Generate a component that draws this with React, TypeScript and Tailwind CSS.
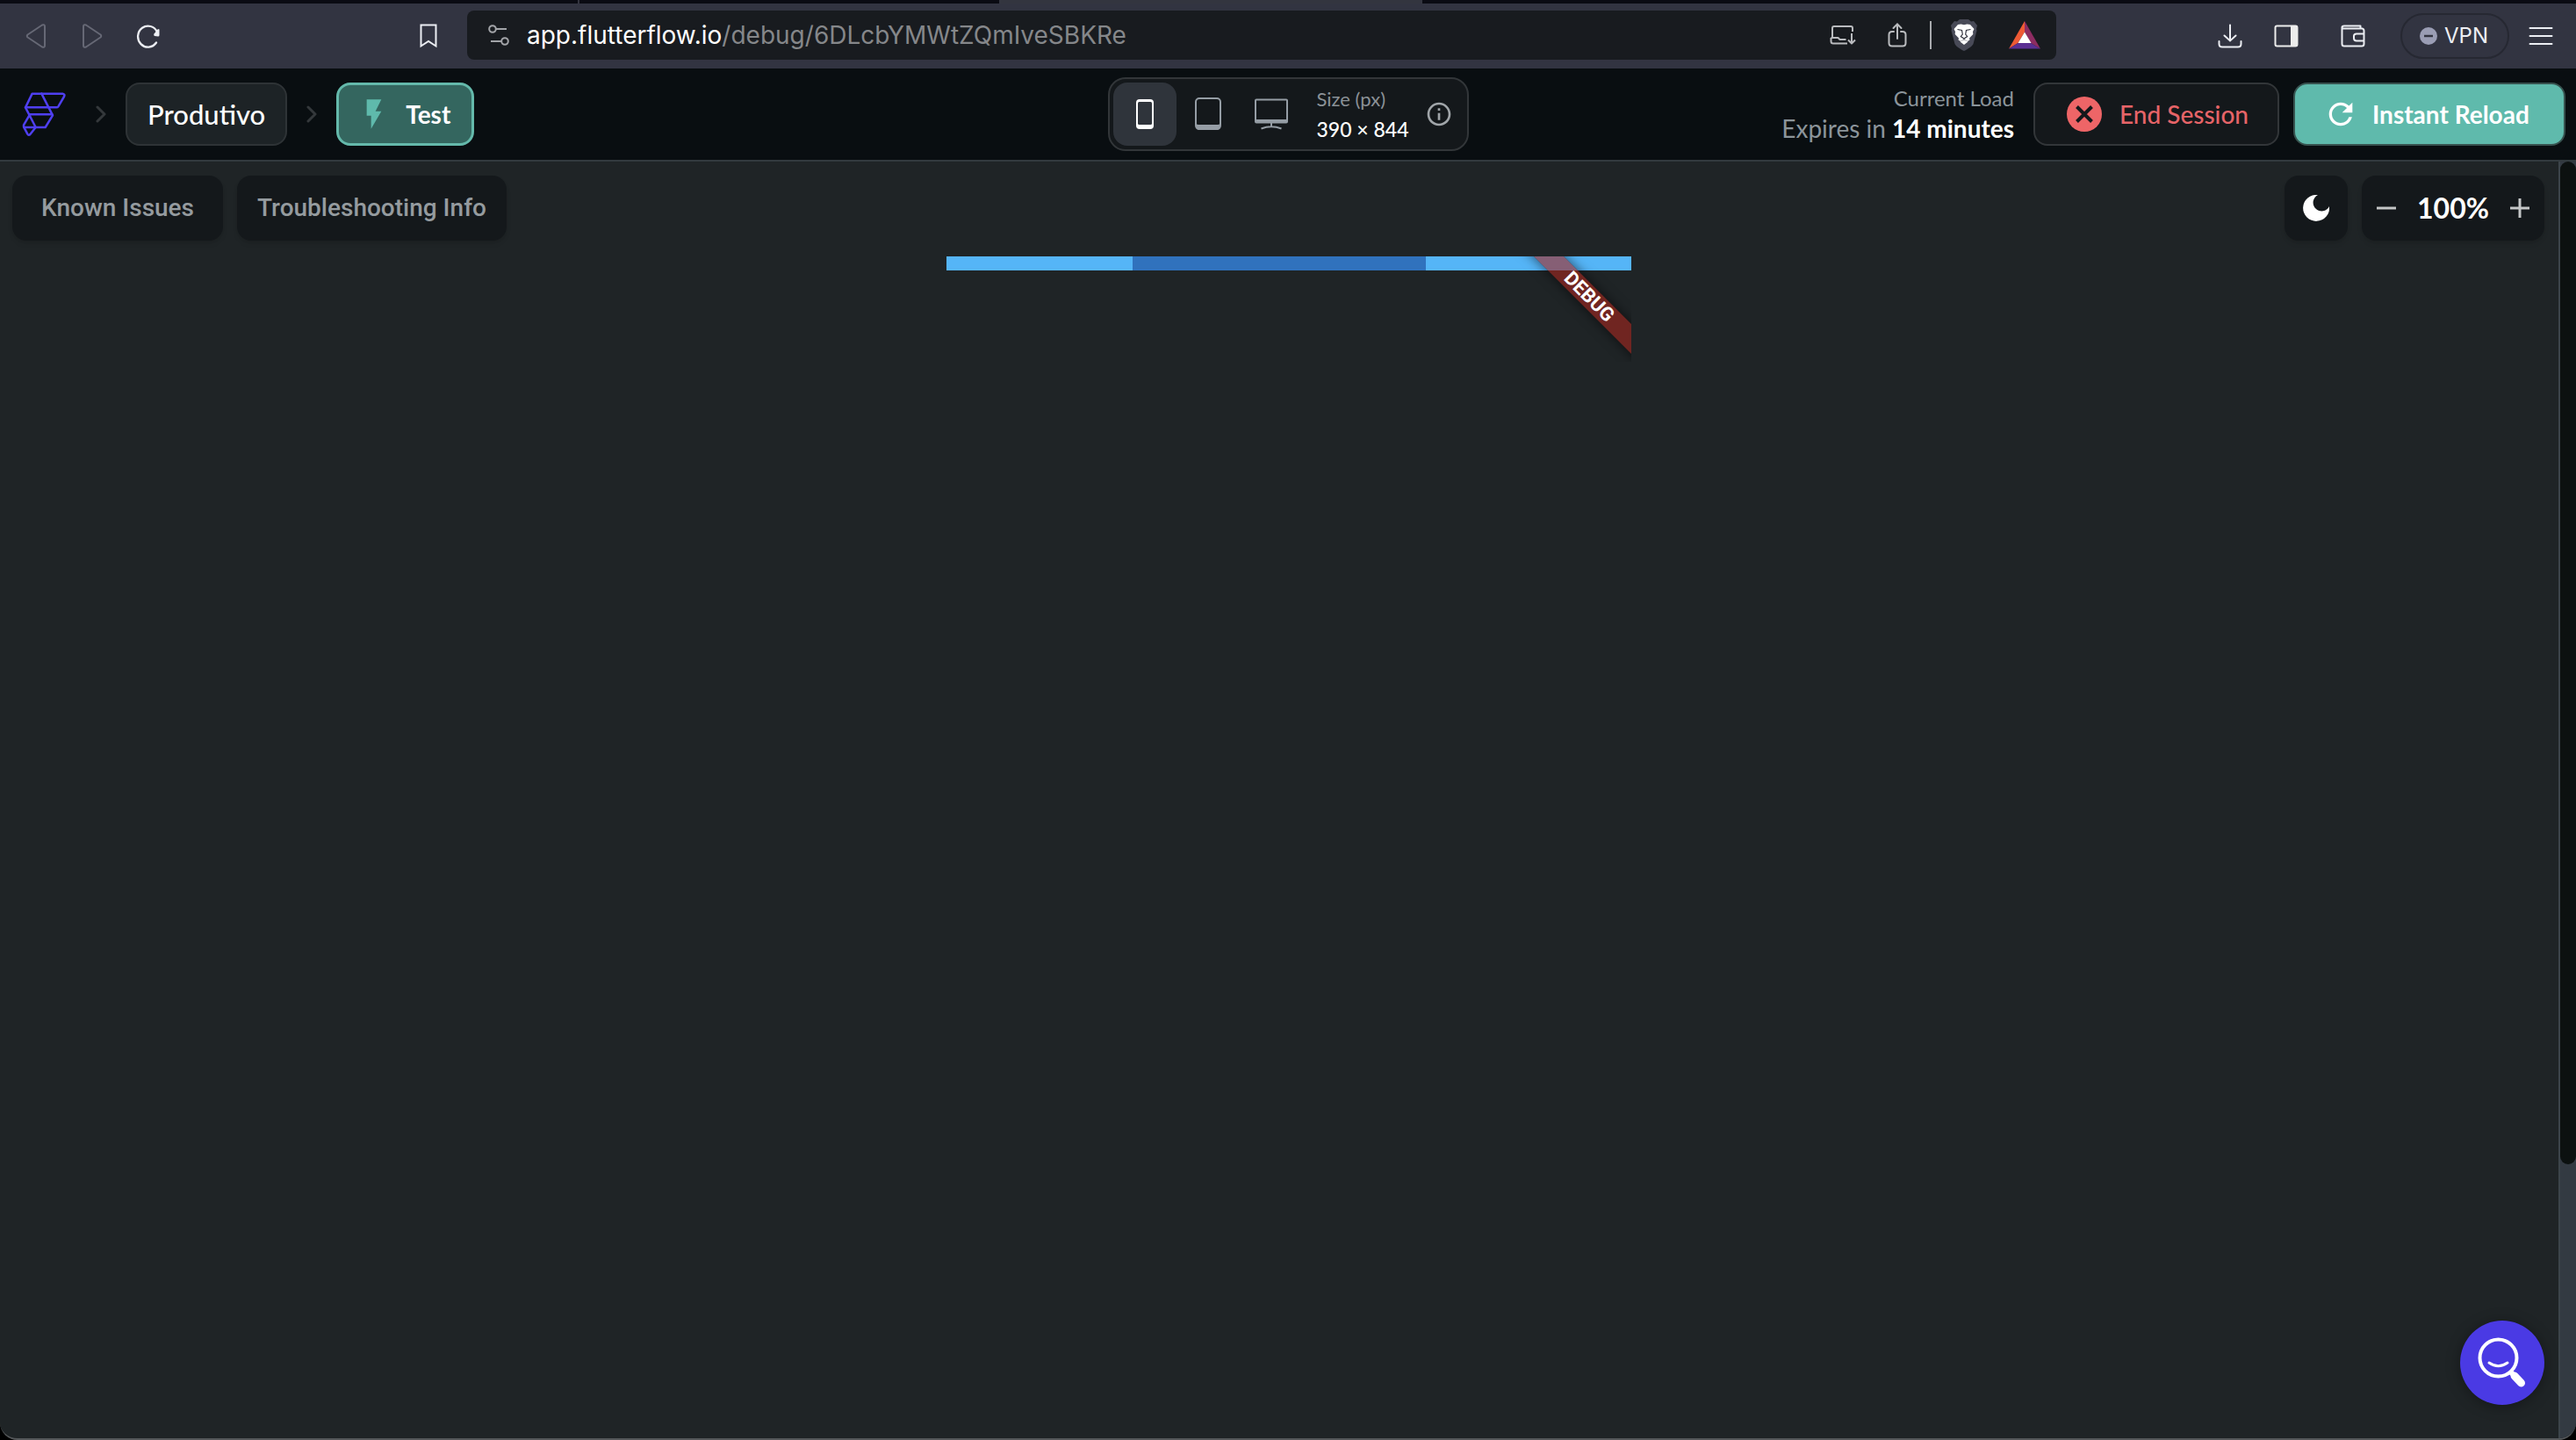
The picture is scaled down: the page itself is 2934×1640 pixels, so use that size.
import type { ReactNode } from "react";
import { MdFlashOn, MdInfoOutline, MdRefresh } from "react-icons/md";

type IconButtonProps = {
  label: string;
  className?: string;
  children: ReactNode;
};

function IconButton({ label, className = "", children }: IconButtonProps) {
  return (
    <button
      aria-label={label}
      className={"flex shrink-0 items-center justify-center " + className}
    >
      {children}
    </button>
  );
}

/* ---------------- ICONS ---------------- */
function BraveLion() {
  return (
    <svg width="30" height="36" viewBox="0 0 30 36">
      <path
        d="M10 0h10l3 2.500 3-.5 4 5-1 4 .5 2-4 15c-.5 2-6 6-10.500 8-4.500-2-10-6-10.500-8L.5 13l.5-2-1-4 4-5 3 .5z"
        fill="#484a57"
      />
      <path
        d="M8 6l3.500-.5 3.500.8 3.500-.8 3.500.5 4.500 5-1.500 3 .3 3-4.300 4.500.5 2-2.500 1.500-4-2.500-4 2.500L8.500 23.500l.5-2L4.700 17l.3-3-1.500-3z"
        fill="#fff"
      />
      <path d="M15 23l4.500 2.500-4.500 3.500-4.500-3.500z" fill="#fff" />
      <path
        d="M7.500 11.500l5 1 .8 4.500-2 2.500 3.700 2.500 3.700-2.500-2-2.500.8-4.500 5-1M15 22v1.500"
        fill="none"
        stroke="#33343f"
        strokeWidth="1.200"
      />
    </svg>
  );
}

function BatTriangle() {
  return (
    <svg width="36" height="32" viewBox="0 0 36 32">
      <path d="M18 0L0 31.500 10.500 25 18 12.500z" fill="#ee5a35" />
      <path d="M18 0l18 31.500L25 25l-7-12.500z" fill="#8d2c62" />
      <path d="M0 31.500h36L25 25H10.500z" fill="#5b2f93" />
      <path d="M18 12.500L25.500 25h-15z" fill="#fff" />
    </svg>
  );
}

function FlutterFlowLogo() {
  return (
    <svg
      width="50"
      height="52"
      viewBox="45 42 150 156"
      fill="none"
      stroke="#4f3ff0"
      strokeWidth="7.500"
      strokeLinecap="round"
      strokeLinejoin="round"
    >
      <path d="M80 50H184Q193 52 189 60L169 94Q167 97 163 97H57Z" />
      <path d="M112 50L150 124L125 165H52" />
      <path d="M57 97L92 165L73 189Q68 194 64 188L51 163V157L72 121H148" />
    </svg>
  );
}

function Chevron() {
  return (
    <svg
      className="mx-[22px]"
      width="12"
      height="20"
      viewBox="0 0 12 20"
      fill="none"
      stroke="#34383b"
      strokeWidth="3"
      strokeLinecap="round"
      strokeLinejoin="round"
    >
      <path d="M2 2l8 8-8 8" />
    </svg>
  );
}

/* ---------------- BROWSER CHROME ---------------- */
function TabStrip() {
  return (
    <div className="flex h-1 bg-[#0a0b13]">
      <div className="w-[22.5%] border-r-2 border-[#33343f]" />
      <div className="w-[16.3%]" />
      <div className="w-[16.4%] bg-[#33353f]" />
    </div>
  );
}

function BrowserBar() {
  return (
    <div className="flex h-[74px] items-center bg-[#323441]">
      <div className="flex w-[532px] shrink-0 items-center pr-[34px] pl-[29px]">
        <IconButton label="Back" className="mr-10">
          <svg width="24" height="28" viewBox="0 0 24 28" fill="none" stroke="#666875" strokeWidth="2" strokeLinejoin="round">
            <path d="M19 1.500L2.500 12.500Q1 14 2.500 15.500L19 26.500Q22 27.500 22 25V3Q22 .5 19 1.500z" />
          </svg>
        </IconButton>
        <IconButton label="Forward" className="mr-[38px]">
          <svg width="24" height="28" viewBox="0 0 24 28" fill="none" stroke="#666875" strokeWidth="2" strokeLinejoin="round">
            <path d="M5 1.500L21.500 12.500Q23 14 21.500 15.500L5 26.500Q2 27.500 2 25V3Q2 .5 5 1.500z" />
          </svg>
        </IconButton>
        <IconButton label="Reload">
          <svg width="28" height="28" viewBox="0 0 28 28">
            <path d="M24 9.500A11.500 12 0 1 0 23 21.500" fill="none" stroke="#eceef3" strokeWidth="2.300" strokeLinecap="round" />
            <path d="M26.500 6.500v6.500q0 1.500-1.500 1.500l-4-.5q-1.500-1-.5-2.500l4.500-5.500z" fill="#eceef3" />
          </svg>
        </IconButton>
        <IconButton label="Bookmark" className="ml-auto">
          <svg width="20" height="28" viewBox="0 0 20 28" fill="none" stroke="#eceef3" strokeWidth="2">
            <path d="M1.500 1.500h17v24L10 20l-8.500 5.500z" />
          </svg>
        </IconButton>
      </div>

      <div className="mb-0.5 flex h-14 min-w-0 flex-1 items-center rounded-lg bg-[#181b1f] pr-[18px] pl-6">
        <svg width="24" height="24" viewBox="0 0 24 24" fill="none" stroke="#a2a4a8" strokeWidth="2">
          <circle cx="5" cy="5" r="3.800" />
          <path d="M9 5h12M3 19h12" />
          <circle cx="19" cy="19" r="3.800" />
        </svg>
        <div
          role="textbox"
          aria-label="Address"
          className="ml-5 flex-1 truncate font-['Inter',sans-serif] text-[28px] leading-9 text-[#85878a]"
        >
          <span className="text-white">app.flutterflow.io</span>
          /debug/6DLcbYMWtZQmIveSBKRe
        </div>
        <IconButton label="Install app" className="mr-9">
          <svg width="30" height="24" viewBox="0 0 30 24" fill="none" stroke="#b9bbbe" strokeWidth="2" strokeLinejoin="round">
            <path d="M3 14V4q0-2 2-2h19q2 0 2 2v4M1.500 15h8l2 2h7M1.500 15v4q0 2.500 2.500 2.500h16" />
            <path d="M25 10v11M21 17.500l4 4 4-4" />
          </svg>
        </IconButton>
        <IconButton label="Share">
          <svg width="22" height="28" viewBox="0 0 22 28" fill="none" stroke="#b9bbbe" strokeWidth="2" strokeLinecap="round">
            <path d="M7 10H5q-3.500 0-3.500 3.500v9.500q0 3.500 3.500 3.500h12q3.500 0 3.500-3.500v-9.500Q20.500 10 17 10h-2M11 18V2M6.500 6L11 1.500 15.500 6" />
          </svg>
        </IconButton>
        <div className="mx-[26px] h-8 w-0.5 bg-[#a9abae]" />
        <IconButton label="Brave Shields" className="-ml-1 mr-9">
          <BraveLion />
        </IconButton>
        <IconButton label="Brave Rewards">
          <BatTriangle />
        </IconButton>
      </div>

      <div className="flex w-[592px] shrink-0 items-center justify-end pr-[26px]">
        <IconButton label="Downloads" className="mr-9">
          <svg width="28" height="28" viewBox="0 0 28 28" fill="none" stroke="#eceef3" strokeWidth="2" strokeLinecap="round">
            <path d="M14 1.500V19M7.500 13.500L14 19.500l6.500-6M1.500 20v3q0 3.500 3.500 3.500h18q3.500 0 3.500-3.500v-3" />
          </svg>
        </IconButton>
        <IconButton label="Sidebar" className="mr-12">
          <svg width="28" height="26" viewBox="0 0 28 26">
            <rect x="1.500" y="1.500" width="25" height="23" rx="2" fill="none" stroke="#ececec" strokeWidth="2" />
            <path d="M19 1h6q2 0 2 2v20q0 2-2 2h-6z" fill="#ececec" />
          </svg>
        </IconButton>
        <IconButton label="Wallet" className="mr-10">
          <svg width="28" height="26" viewBox="0 0 28 26" fill="none" stroke="#eceef3" strokeWidth="2" strokeLinejoin="round">
            <path d="M26.500 10V7q0-2-2-2.500H4Q1.500 4.500 1.500 3q0-1.500 2.500-1.500h18.500V4.500M1.500 3v19q0 2.500 2.500 2.500h20q2.500 0 2.500-2.500v-3" />
            <path d="M26.500 10.500H18q-3 0-3 2.500v2.500q0 3 3 3h8.500z" />
          </svg>
        </IconButton>
        <button className="mr-[22px] flex h-[52px] items-center rounded-full border-2 border-[#262832] pr-[22px] pl-5 font-['Inter',sans-serif] text-2xl text-[#eceef3]">
          <svg className="mr-2" width="20" height="20" viewBox="0 0 20 20">
            <circle cx="10" cy="10" r="10" fill="#9a9db4" />
            <path d="M5 10h10" stroke="#323441" strokeWidth="2.500" />
          </svg>
          VPN
        </button>
        <IconButton label="Menu">
          <svg width="28" height="22" viewBox="0 0 28 22" stroke="#eceef3" strokeWidth="2" strokeLinecap="round">
            <path d="M1.500 2h25M1.500 11h25M1.500 20h25" />
          </svg>
        </IconButton>
      </div>
    </div>
  );
}

/* ---------------- APP HEADER ---------------- */
function DevicePicker() {
  return (
    <div className="flex h-21 items-center rounded-[20px] border-2 border-[#323639] bg-[#14181b] pr-4 pl-1">
      <IconButton label="Phone" className="size-18 rounded-2xl bg-[#2f343b]">
        <svg width="20" height="34" viewBox="0 0 20 34">
          <rect width="20" height="34" rx="4" fill="#fff" />
          <rect x="2" y="3" width="16" height="26" rx="1.500" fill="#2f343b" />
        </svg>
      </IconButton>
      <IconButton label="Tablet" className="size-18">
        <svg width="30" height="38" viewBox="0 0 30 38">
          <rect x="1" y="1" width="28" height="35" rx="4" fill="none" stroke="#959da5" strokeWidth="2" />
          <path d="M1 28q0 3 3 3h22q3 0 3-3v5q0 4-4 4H5q-4 0-4-4z" fill="#959da5" />
        </svg>
      </IconButton>
      <IconButton label="Desktop" className="size-18">
        <svg width="38" height="36" viewBox="0 0 38 36" fill="none" stroke="#959da5">
          <rect x="1" y="1.500" width="36" height="26" rx="1" strokeWidth="2" />
          <path d="M1 26h36" strokeWidth="4" />
          <path d="M19 28v4M7.500 34.500Q19 30 30.500 34.500" strokeWidth="2" />
        </svg>
      </IconButton>
      <div className="mr-[18px] ml-4 leading-[34px]">
        <div className="text-[22px] text-[#8b9197]">Size (px)</div>
        <div className="text-[23px] font-medium text-white">390 × 844</div>
      </div>
      <IconButton label="Size info">
        <MdInfoOutline size={32} color="#a0a5a9" />
      </IconButton>
    </div>
  );
}

function Header() {
  return (
    <header className="grid h-[106px] grid-cols-[1fr_auto_1fr] items-center border-b-2 border-[#323a3e] bg-[#090e11] font-['Lato',sans-serif]">
      <nav className="flex items-center pl-[25px]">
        <a href="#" aria-label="FlutterFlow" className="mr-3">
          <FlutterFlowLogo />
        </a>
        <Chevron />
        <button className="h-18 rounded-2xl border-2 border-[#2e3336] bg-[#1d2326] px-[23px] text-[31px] font-medium text-white">
          Produtivo
        </button>
        <Chevron />
        <button className="flex h-18 items-center gap-4 rounded-2xl border-3 border-[#64b9ab] bg-[#34665f] pr-6 pl-5 text-[28px] font-bold text-white">
          <MdFlashOn size={40} color="#5fbaac" />
          Test
        </button>
      </nav>

      <DevicePicker />

      <div className="flex items-center justify-end gap-4 pr-3">
        <div className="mr-1.5 text-right leading-9 text-[#8b949a]">
          <div className="text-2xl">Current Load</div>
          <div className="text-[28px]">
            Expires in <b className="text-white">14 minutes</b>
          </div>
        </div>
        <button className="flex h-18 w-[280px] items-center gap-5 rounded-2xl border-2 border-[#323639] bg-[#14181b] pl-9 text-[28px] font-medium text-[#e66468]">
          <svg width="40" height="40" viewBox="0 0 40 40">
            <circle cx="20" cy="20" r="20" fill="#ee6567" />
            <path d="M11.500 11.500l17 17M28.500 11.500l-17 17" stroke="#14181b" strokeWidth="4" />
          </svg>
          End Session
        </button>
        <button className="flex h-18 w-[310px] items-center gap-4 rounded-2xl border-2 border-[#37524f] bg-[#5fbaac] pl-8 text-[28px] font-bold text-white">
          <MdRefresh size={40} />
          Instant Reload
        </button>
      </div>
    </header>
  );
}

/* ---------------- PREVIEW ---------------- */
function Preview() {
  return (
    <div className="mt-[18px] flex justify-center pl-[22px]">
      <div className="relative h-[120px] w-[780px] overflow-hidden">
        <div className="flex h-4 bg-[#55b5f7]">
          <div className="ml-[212px] w-[334px] bg-[#3072bd]" />
        </div>
        <div className="absolute top-[34px] -right-[52px] flex h-6 w-[200px] rotate-45 items-center justify-center bg-[#a6261e]/60 font-['Roboto',sans-serif] text-[22px] leading-6 font-bold text-white shadow-[0_0_14px_rgba(0,0,0,0.6)]">
          DEBUG
        </div>
      </div>
    </div>
  );
}

export default function App() {
  return (
    <div className="bg-black">
      <div className="flex min-h-screen flex-col overflow-hidden rounded-b-[20px] border-b-2 border-[#55585a] bg-[#1f2426]">
        <TabStrip />
        <BrowserBar />
        <Header />

        <div className="flex flex-1">
          <main className="relative min-w-0 flex-1">
            <div className="flex items-center pt-4 pr-4 pl-3.5">
              <button className="mr-4 h-[74px] rounded-2xl bg-[#14181b] px-[33px] font-['Roboto',sans-serif] text-[28px] font-medium text-[#959b9f] shadow-md">
                Known Issues
              </button>
              <button className="h-[74px] rounded-2xl bg-[#14181b] px-[23px] font-['Roboto',sans-serif] text-[28px] font-medium text-[#959b9f] shadow-md">
                Troubleshooting Info
              </button>
              <IconButton
                label="Toggle dark mode"
                className="mr-4 ml-auto h-[74px] w-18 rounded-2xl bg-[#14181b] shadow-md"
              >
                <svg width="30" height="30" viewBox="0 0 30 30">
                  <path d="M17 0A15 15 0 1 0 30 13A9.700 9.700 0 1 1 17 0z" fill="#fff" />
                </svg>
              </IconButton>
              <div className="flex h-[74px] w-[208px] items-center justify-between rounded-2xl bg-[#14181b] px-4 font-['Lato',sans-serif] text-[32px] font-bold text-white shadow-md">
                <IconButton label="Zoom out">
                  <svg width="24" height="24" viewBox="0 0 24 24">
                    <path d="M1 12h22" stroke="#c4c6c7" strokeWidth="3" />
                  </svg>
                </IconButton>
                100%
                <IconButton label="Zoom in">
                  <svg width="24" height="24" viewBox="0 0 24 24">
                    <path d="M1 12h22M12 1v22" stroke="#c4c6c7" strokeWidth="3" />
                  </svg>
                </IconButton>
              </div>
            </div>

            <Preview />

            <IconButton
              label="Help"
              className="absolute right-4 bottom-[38px] size-24 rounded-full bg-[#4a3ae4] shadow-[0_2px_16px_rgba(0,0,0,0.35)]"
            >
              <svg width="56" height="60" viewBox="0 0 56 60" fill="none" stroke="#fff" strokeLinecap="round">
                <circle cx="23.500" cy="24.500" r="21" strokeWidth="4" />
                <path d="M13 30q10.500 7.500 21 0" strokeWidth="3" />
                <path d="M39 42l2.500 2.500" strokeWidth="6" />
                <path d="M42 45l7.500 8" strokeWidth="9" />
              </svg>
            </IconButton>
          </main>

          <div className="flex w-5 flex-col border-l-2 border-[#3c444a] bg-[#333a42]">
            <div className="grow-[1142] rounded-[9px] bg-[#0c1110]" />
            <div className="grow-[312]" />
          </div>
        </div>
      </div>
    </div>
  );
}
